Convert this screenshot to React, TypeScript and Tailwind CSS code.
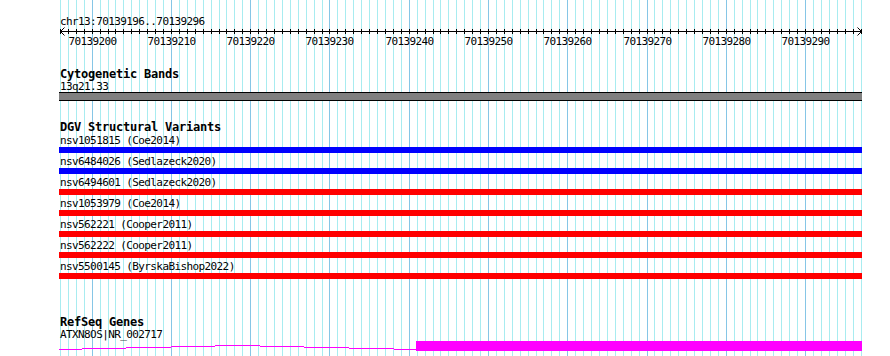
const START = 70139196;
const BP = 101;
const PX_PER_BP = 7.926;
const LEFT = 60;

const gridX = (i: number) => Math.round(LEFT + i * PX_PER_BP);

const VARIANTS = [
  { label: "nsv1051815 (Coe2014)", color: "bg-[#0000ff]" },
  { label: "nsv6484026 (Sedlazeck2020)", color: "bg-[#0000ff]" },
  { label: "nsv6494601 (Sedlazeck2020)", color: "bg-[#ff0000]" },
  { label: "nsv1053979 (Coe2014)", color: "bg-[#ff0000]" },
  { label: "nsv562221 (Cooper2011)", color: "bg-[#ff0000]" },
  { label: "nsv562222 (Cooper2011)", color: "bg-[#ff0000]" },
  { label: "nsv5500145 (ByrskaBishop2022)", color: "bg-[#ff0000]" },
];

// intron "hat" drawn as stepped segments, relative to gene row top
const INTRON = [
  { x1: 59, x2: 82, y: 4 },
  { x1: 82, x2: 126, y: 3 },
  { x1: 126, x2: 171, y: 2 },
  { x1: 171, x2: 215, y: 1 },
  { x1: 215, x2: 260, y: 0 },
  { x1: 260, x2: 304, y: 1 },
  { x1: 304, x2: 349, y: 2 },
  { x1: 349, x2: 394, y: 3 },
  { x1: 394, x2: 416, y: 4 },
];

const lines = Array.from({ length: BP + 1 }, (_, i) => ({
  x: gridX(i),
  major: (START + i) % 10 === 0,
}));

function Grid() {
  return (
    <svg
      className="absolute left-0 top-0"
      width={862}
      height={356}
      aria-hidden="true"
    >
      {lines.map((l) => (
        <rect
          key={l.x}
          x={l.x}
          y={0}
          width={1}
          height={356}
          fill={l.major ? "#86c6e6" : "#a8ecf0"}
        />
      ))}
    </svg>
  );
}

function Ruler() {
  const majors = lines
    .map((l, i) => ({ ...l, pos: START + i }))
    .filter((l) => l.major);
  return (
    <svg width={862} height={50} className="block">
      <text
        x={60}
        y={25}
        fontFamily="'DejaVu Sans Mono', monospace"
        fontSize={11}
        letterSpacing={-0.6}
        fill="#000"
      >
        chr13:70139196..70139296
      </text>
      <rect x={60} y={31} width={801} height={1} fill="#000" />
      {lines.map((l) => (
        <rect key={l.x} x={l.x} y={29} width={1} height={5} fill="#000" />
      ))}
      <path d="M64.5 27.5 L60.5 31.5 L64.5 35.5" fill="none" stroke="#000" />
      <path d="M857.5 27.5 L861.5 31.5 L857.5 35.5" fill="none" stroke="#000" />
      {majors.map((m) => (
        <text
          key={m.pos}
          x={m.x + 0.5}
          y={45}
          textAnchor="middle"
          fontFamily="'DejaVu Sans Mono', monospace"
          fontSize={11}
          letterSpacing={-0.6}
          fill="#000"
        >
          {m.pos}
        </text>
      ))}
    </svg>
  );
}

function TrackTitle({ children, className = "" }: { children: string; className?: string }) {
  return (
    <div
      className={`pl-[60px] text-[12px] leading-[13px] font-bold tracking-[-0.22px] text-black whitespace-nowrap ${className}`}
    >
      {children}
    </div>
  );
}

function Label({ children, className = "h-[13px]" }: { children: string; className?: string }) {
  return (
    <div
      className={`pl-[60px] text-[11px] leading-[13px] tracking-[-0.6px] text-black whitespace-nowrap ${className}`}
    >
      {children}
    </div>
  );
}

export default function App() {
  return (
    <div className="relative w-[890px] h-[356px] bg-white overflow-hidden font-['DejaVu_Sans_Mono',monospace]">
      <Grid />
      <div className="relative w-[862px] flex flex-col">
        <Ruler />

        <TrackTitle className="mt-[18px] h-[12px]">Cytogenetic Bands</TrackTitle>
        <Label className="h-[12px]">13q21.33</Label>
        <div className="ml-[59px] w-[803px] h-[9px] border-y border-black bg-[#808080]" />

        <TrackTitle className="mt-[20px] h-[13px]">DGV Structural Variants</TrackTitle>
        {VARIANTS.map((v) => (
          <div key={v.label} className="flex flex-col h-[21px]">
            <Label>{v.label}</Label>
            <div className={`ml-[59px] w-[803px] h-[6px] ${v.color}`} />
          </div>
        ))}

        <TrackTitle className="mt-[35px] h-[12px]">RefSeq Genes</TrackTitle>
        <Label>ATXN8OS|NR_002717</Label>
        <svg width={862} height={10} className="block">
          {INTRON.map((s) => (
            <rect
              key={s.x1}
              x={s.x1}
              y={s.y + 4}
              width={s.x2 - s.x1}
              height={1}
              fill="#ff00ff"
            />
          ))}
          <rect x={416} y={0} width={446} height={10} fill="#ff00ff" />
        </svg>
      </div>
    </div>
  );
}
